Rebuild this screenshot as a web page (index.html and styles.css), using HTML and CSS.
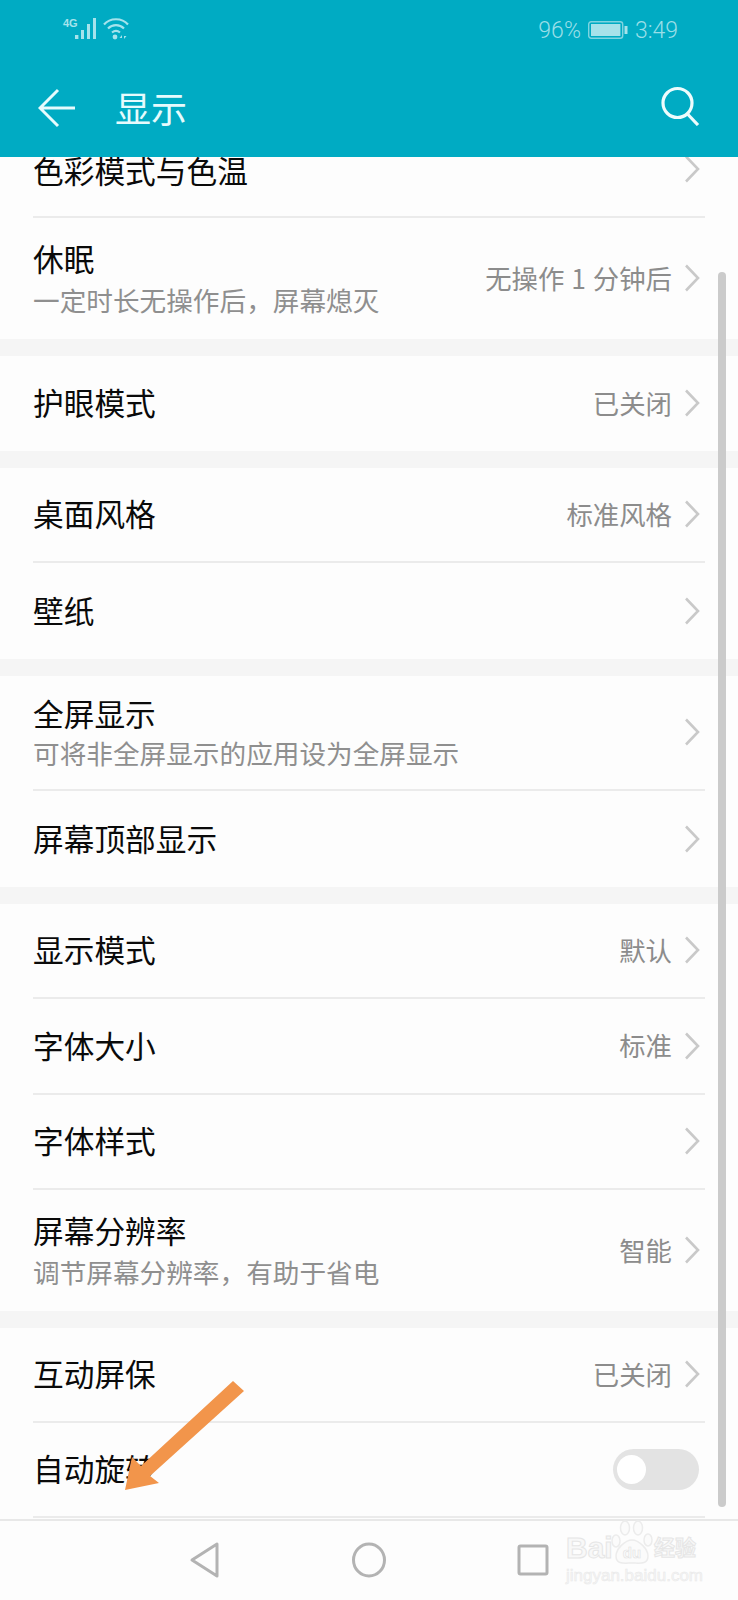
FILE: index.html
```html
<!DOCTYPE html>
<html lang="zh-CN">
<head>
<meta charset="utf-8">
<title>显示</title>
<link rel="stylesheet" href="styles.css">
</head>
<body>
<svg class="defs" width="0" height="0" aria-hidden="true">
  <symbol id="chev" viewBox="0 0 16 28"><path d="M2 1.500l12 12.500L2 26.500" fill="none" stroke="#c9c9c9" stroke-width="2.600"/></symbol>
</svg>
<div class="phone">
  <header class="appbar">
    <div class="status">
      <div class="status-left">
        <span class="net">4G</span>
        <svg class="signal" width="22" height="22" viewBox="0 0 22 22"><g fill="#a5e3ec"><rect x="0" y="17" width="3.400" height="4"/><rect x="6" y="12" width="3" height="9"/><rect x="12" y="6" width="3" height="15"/><rect x="18" y="0" width="3" height="21"/></g></svg>
        <svg class="wifi" width="26" height="22" viewBox="0 0 26 22"><g fill="none" stroke="#a5e3ec" stroke-width="2.200"><path d="M1 6.500C7-.5 19-.5 25 6.500"/><path d="M5 10.500c4.500-4.500 11.500-4.500 16 0"/><path d="M9 14.500c2.500-2 5.500-2 8 0"/></g><circle cx="12" cy="19" r="2.400" fill="#a5e3ec"/><path d="M19 17l-2.500 3h2.500zM21 21l2.500-3H21z" fill="#a5e3ec"/></svg>
      </div>
      <div class="status-right">
        <span>96%</span>
        <svg class="battery" width="40" height="18" viewBox="0 0 40 18"><rect x="0.700" y="0.700" width="34" height="16.600" rx="2.500" fill="none" stroke="#7fd4e0" stroke-width="1.400"/><rect x="3" y="3" width="29.400" height="12" fill="#a6e2ea"/><rect x="36.500" y="5" width="3" height="8" fill="#a6e2ea"/></svg>
        <span>3:49</span>
      </div>
    </div>
    <div class="toolbar">
      <svg class="back" width="38" height="40" viewBox="0 0 38 40"><path d="M20 2L2 20l18 18M2 20h35" fill="none" stroke="#e6fbfd" stroke-width="3"/></svg>
      <h1 class="title">显示</h1>
      <svg class="search" width="40" height="40" viewBox="0 0 40 40"><circle cx="17.500" cy="17" r="14.500" fill="none" stroke="#eefcfd" stroke-width="3.200"/><path d="M27.500 28L38 39" fill="none" stroke="#eefcfd" stroke-width="3.200"/></svg>
    </div>
  </header>

  <main class="content">
    <div class="list">
      <section class="group first">
        <div class="row"><div class="row-body"><div class="label">色彩模式与色温</div><svg class="chev"><use href="#chev"/></svg></div></div>
        <div class="row row-tall"><div class="row-body none"><div class="label-wrap"><div class="label">休眠</div><div class="sub">一定时长无操作后，屏幕熄灭</div></div><span class="value">无操作 1 分钟后</span><svg class="chev"><use href="#chev"/></svg></div></div>
      </section>
      <section class="group">
        <div class="row"><div class="row-body none"><div class="label">护眼模式</div><span class="value">已关闭</span><svg class="chev"><use href="#chev"/></svg></div></div>
      </section>
      <section class="group">
        <div class="row"><div class="row-body"><div class="label">桌面风格</div><span class="value">标准风格</span><svg class="chev"><use href="#chev"/></svg></div></div>
        <div class="row row-wide"><div class="row-body none"><div class="label">壁纸</div><svg class="chev"><use href="#chev"/></svg></div></div>
      </section>
      <section class="group">
        <div class="row row-mid"><div class="row-body"><div class="label-wrap tight"><div class="label">全屏显示</div><div class="sub">可将非全屏显示的应用设为全屏显示</div></div><svg class="chev"><use href="#chev"/></svg></div></div>
        <div class="row row-wide"><div class="row-body none"><div class="label">屏幕顶部显示</div><svg class="chev"><use href="#chev"/></svg></div></div>
      </section>
      <section class="group">
        <div class="row"><div class="row-body"><div class="label">显示模式</div><span class="value">默认</span><svg class="chev"><use href="#chev"/></svg></div></div>
        <div class="row row-wide"><div class="row-body"><div class="label">字体大小</div><span class="value">标准</span><svg class="chev"><use href="#chev"/></svg></div></div>
        <div class="row"><div class="row-body"><div class="label">字体样式</div><svg class="chev"><use href="#chev"/></svg></div></div>
        <div class="row row-tall"><div class="row-body none"><div class="label-wrap"><div class="label">屏幕分辨率</div><div class="sub">调节屏幕分辨率，有助于省电</div></div><span class="value">智能</span><svg class="chev"><use href="#chev"/></svg></div></div>
      </section>
      <section class="group">
        <div class="row"><div class="row-body"><div class="label">互动屏保</div><span class="value">已关闭</span><svg class="chev"><use href="#chev"/></svg></div></div>
        <div class="row"><div class="row-body"><div class="label">自动旋转</div><span class="switch"><span class="knob"></span></span></div></div>
      </section>
    </div>
    <div class="scrollbar"></div>
  </main>

  <nav class="navbar">
    <svg width="32" height="38" viewBox="0 0 32 38"><path d="M28 3v32L3 19z" fill="none" stroke="#b3b3b3" stroke-width="3" stroke-linejoin="round"/></svg>
    <svg width="36" height="38" viewBox="0 0 36 38"><ellipse cx="18" cy="19" rx="15.500" ry="16" fill="none" stroke="#b3b3b3" stroke-width="3"/></svg>
    <svg width="32" height="34" viewBox="0 0 32 34"><rect x="2" y="3" width="28" height="28" rx="1.500" fill="none" stroke="#b3b3b3" stroke-width="3"/></svg>
  </nav>

  <svg class="annot" width="130" height="115" viewBox="0 0 130 115"><path d="M110 1l11 10-94 85 9 7-34 7 7-33 9 9z" fill="#f2954b"/></svg>

  <div class="watermark">
    <div class="wm-top"><span class="wm-bai">Bai</span>
      <svg class="paw" width="44" height="44" viewBox="0 0 44 44"><g fill="#fbfbfb" stroke="#ececec" stroke-width="1.500"><ellipse cx="6" cy="21" rx="4" ry="6"/><ellipse cx="15" cy="8" rx="4.500" ry="7"/><ellipse cx="28" cy="8" rx="4.500" ry="7"/><ellipse cx="38" cy="20" rx="4" ry="6"/><path d="M22 20c-7 0-16 9-16 16 0 9 9 7 16 7s16 2 16-7c0-7-9-16-16-16z"/></g><text x="22" y="38" class="paw-text">du</text></svg>
      <span class="wm-cn">经验</span></div>
    <div class="wm-url">jingyan.baidu.com</div>
  </div>
</div>
</body>
</html>
```
FILE: styles.css
```css
* { box-sizing: border-box; margin: 0; padding: 0; }
html, body { width: 738px; height: 1600px; overflow: hidden; }
body { font-family: "Noto Sans CJK SC", "Noto Sans", sans-serif; background: #fdfdfd; }
.defs { position: absolute; }
.phone { position: relative; width: 738px; height: 1600px; display: flex; flex-direction: column; overflow: hidden; }

.appbar { height: 157px; background: #00abc3; flex: none; }
.status { height: 59px; padding: 19px 60px 0 63px; display: flex; justify-content: space-between; align-items: flex-start; color: #9adfe8; font-family: Roboto, sans-serif; font-size: 23px; font-weight: 300; }
.status-left { display: flex; align-items: flex-start; margin-top: -1px; }
.net { font-family: "Liberation Sans", sans-serif; font-size: 11px; font-weight: 700; line-height: 11px; width: 12px; color: #a5e3ec; }
.wifi { margin-left: 6px; }
.status-right { display: flex; align-items: center; gap: 7px; height: 22px; }
.toolbar { height: 98px; padding: 0 38px 0 38px; display: flex; align-items: flex-start; }
.back { margin-top: 29px; flex: none; }
.title { font-size: 36px; font-weight: 400; line-height: 44px; color: #e6fbfd; margin: 26px 0 0 39px; flex: 1; }
.search { margin-top: 27px; flex: none; }

.content { position: relative; flex: 1; overflow: hidden; }
.list { margin-top: -34px; display: flex; flex-direction: column; gap: 17px; background: #f5f5f5; }
.group { background: #fdfdfd; }
.row { height: 95px; padding: 0 33px; }
.row-wide { height: 96px; }
.row-tall { height: 121px; }
.row-mid { height: 115px; }
.row-body { height: 100%; padding-right: 5px; display: flex; align-items: center; border-bottom: 2px solid #ebebeb; }
.row-body.none { border-bottom: 0; }
.label-wrap { flex: 1; display: flex; flex-direction: column; gap: 2px; padding-top: 1px; }
.label-wrap.tight { gap: 0; padding-top: 0; }
.label { font-size: 30.700px; line-height: 40px; color: #0a0a0a; flex: 1; margin-bottom: 3px; }
.first .row:first-child .label { margin-bottom: 0; }
.label-wrap .label { flex: none; margin-bottom: 0; }
.sub { font-size: 26.650px; line-height: 40px; color: #8f8f8f; white-space: nowrap; }
.value { font-size: 26.400px; line-height: 40px; word-spacing: 1px; color: #8c8c8c; margin: 0 12px 2px 0; white-space: nowrap; }
.chev { width: 16px; height: 28px; flex: none; margin-bottom: 1px; }
.switch { width: 86px; height: 41px; margin-right: 1px; border-radius: 21px; background: #e3e3e3; display: flex; align-items: center; padding-left: 4px; }
.knob { width: 29px; height: 29px; border-radius: 50%; background: #fff; }
.scrollbar { position: absolute; right: 12px; top: 115px; width: 8px; height: 1235px; border-radius: 4px; background: #cbcbcb; }

.navbar { height: 81px; flex: none; background: #fdfdfd; border-top: 2px solid #e8e8e8; padding: 0 0 2px 189px; display: flex; align-items: center; gap: 130px; }

.annot { position: absolute; left: 123px; top: 1380px; }

.watermark { position: absolute; left: 566px; top: 1518px; width: 140px; color: #f8f8f8; }
.wm-top { display: flex; align-items: flex-end; height: 46px; }
.wm-bai { font-family: "Liberation Sans", sans-serif; font-size: 30px; font-weight: 700; line-height: 32px; -webkit-text-stroke: 1px #e6e6e6; width: 44px; }
.wm-cn { font-size: 21px; line-height: 28px; font-weight: 700; -webkit-text-stroke: 1px #e6e6e6; white-space: nowrap; padding-bottom: 4px; }
.paw { flex: none; }
.paw-text { font-family: "Liberation Sans", sans-serif; font-size: 15px; font-weight: 700; text-anchor: middle; fill: #fbfbfb; stroke: #e2e2e2; stroke-width: 0.600; }
.wm-url { font-family: "Liberation Sans", sans-serif; font-size: 17px; line-height: 18px; margin-top: 3px; color: #f6f6f6; -webkit-text-stroke: 0.500px #e8e8e8; white-space: nowrap; }
```
